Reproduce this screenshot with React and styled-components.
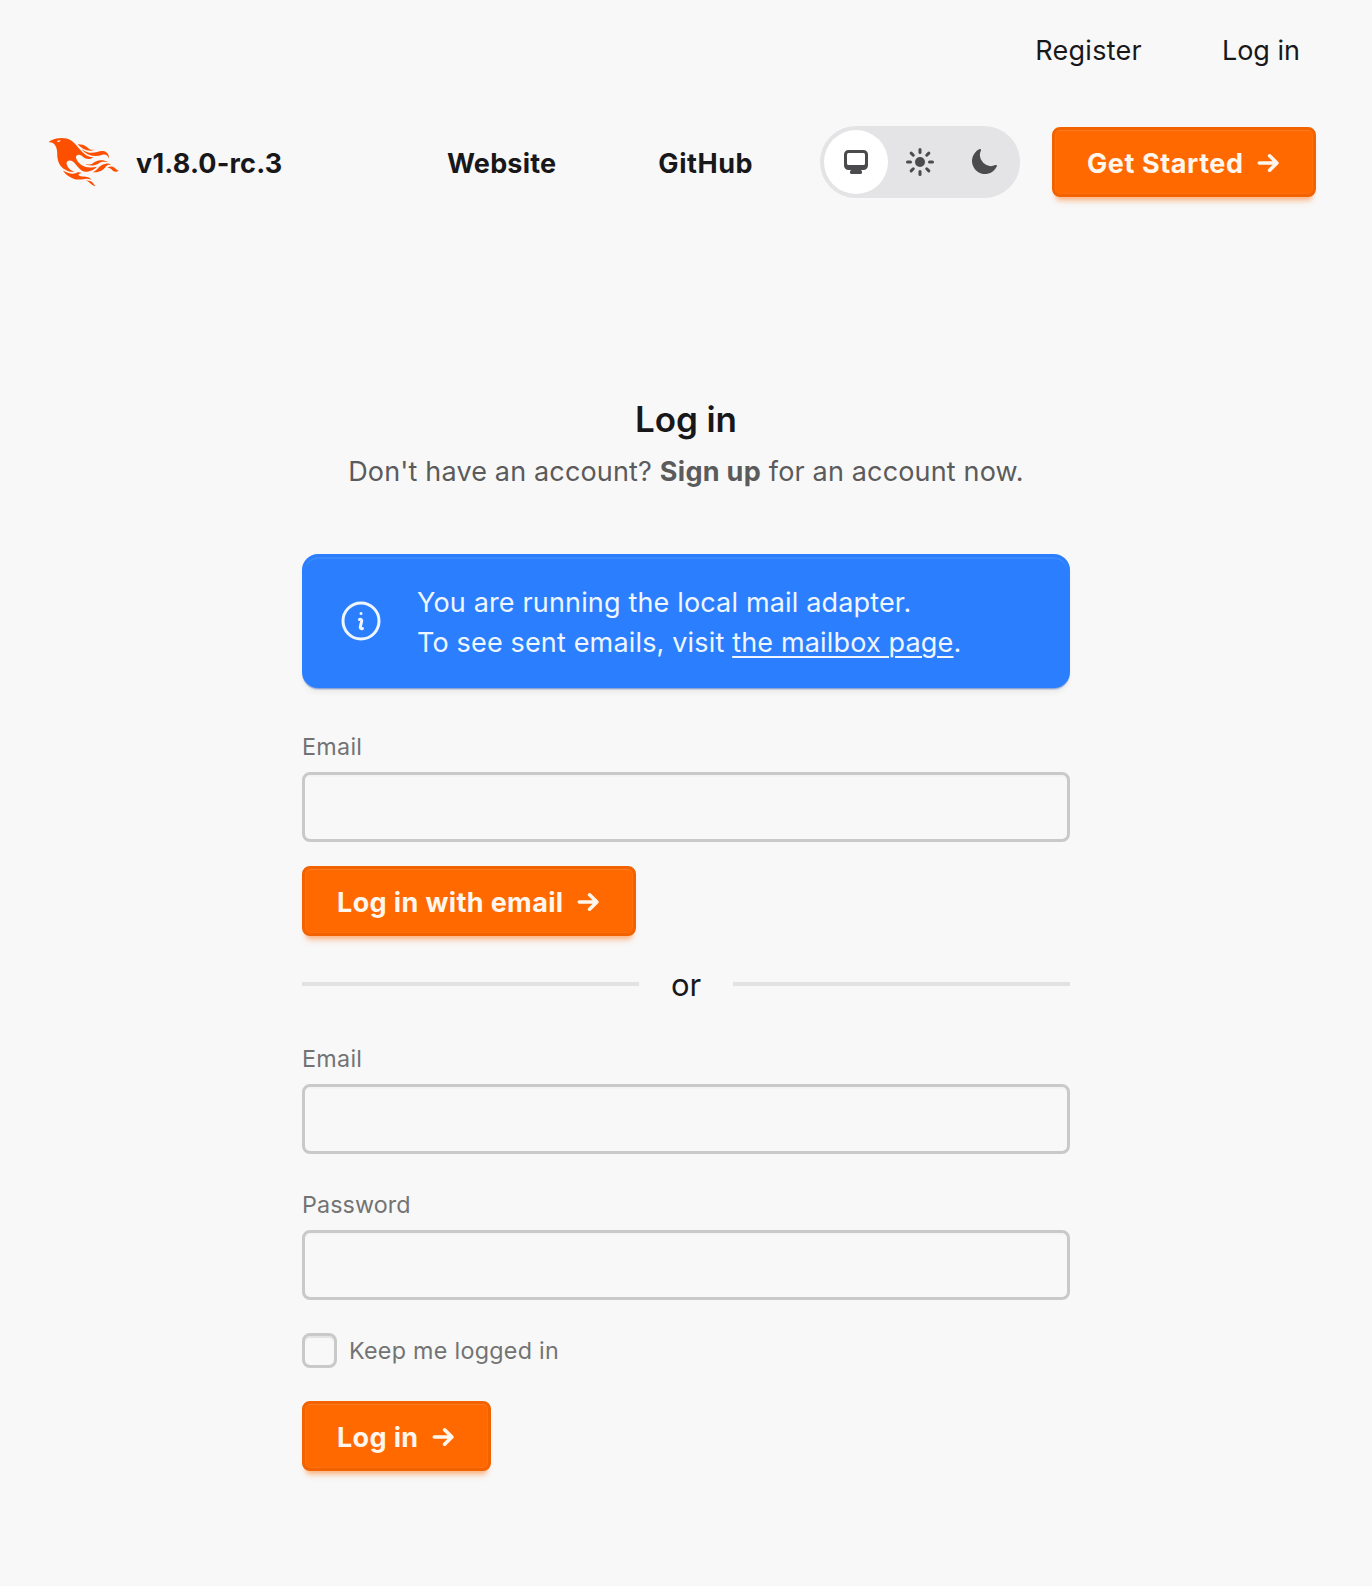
import React from "react";
import styled, { createGlobalStyle } from "styled-components";

const GlobalStyle = createGlobalStyle`
  *, *::before, *::after { box-sizing: border-box; }
  body {
    margin: 0;
    background: #f8f8f8;
    color: #18181b;
    font-family: Inter, "Liberation Sans", sans-serif;
    font-size: 27px;
    line-height: 40px;
    font-feature-settings: "calt" 0;
  }
`;

const Page = styled.div`
  min-height: 1586px;
  display: flex;
  flex-direction: column;
`;

const UserMenu = styled.nav`
  display: flex;
  justify-content: flex-end;
  gap: 80px;
  padding: 31px 72px 0 0;
  height: 94px;
`;

const MenuLink = styled.a`
  font-size: 27px;
  letter-spacing: ${(p) => p.$track || "0"};
  color: #18181b;
`;

const Header = styled.header`
  display: flex;
  align-items: center;
  height: 136px;
  padding: 0 56px 0 48px;
`;

const Brand = styled.a`
  display: flex;
  align-items: center;
  gap: 16px;
  width: 366px;
  font-weight: 650;
`;

const Logo = styled.svg`
  width: 72px;
  height: 48px;
  fill: #fd4f00;
`;

const Version = styled.span`
  padding-top: 3px;
  letter-spacing: ${(p) => p.$track || "0"};
`;

const NavLinks = styled.nav`
  display: flex;
  flex: 1;
  padding: 3px 0 0 33px;
  gap: 102px;
`;

const NavLink = styled.a`
  font-weight: 650;
  letter-spacing: ${(p) => p.$track || "0"};
`;

const ThemeToggle = styled.div`
  display: flex;
  border: 4px solid #e4e4e6;
  border-radius: 36px;
  background: #e4e4e6;
  margin-right: 32px;
`;

const ThemeOption = styled.button`
  display: flex;
  width: 64px;
  height: 64px;
  padding: 16px;
  border: 0;
  border-radius: 50%;
  color: #4b4b4d;
  background: ${(p) => (p.$active ? "#fff" : "transparent")};
`;

const ThemeIcon = styled.svg`
  width: 32px;
  height: 32px;
`;

const Button = styled.button`
  display: flex;
  align-items: center;
  gap: 13px;
  width: ${(p) => p.$width};
  height: 70px;
  padding: 3px 0 0 32px;
  border: 3px solid #f26200;
  border-radius: 8px;
  background: #ff6900;
  color: #fff7ed;
  font: 650 27px/40px Inter, "Liberation Sans", sans-serif;
  letter-spacing: ${(p) => p.$track || "0"};
  white-space: nowrap;
  box-shadow: inset 0 2px 0 -1px rgba(255, 255, 255, 0.08),
    inset 0 0 0 1px rgba(255, 255, 255, 0.05),
    0 6px 4px -4px rgba(255, 105, 0, 0.3),
    0 8px 6px -4px rgba(255, 105, 0, 0.3);
`;

const ArrowIcon = styled.svg`
  width: 22px;
  height: 20px;
  flex: none;
  margin-top: -2px;
`;

const Main = styled.main`
  display: flex;
  flex-direction: column;
  width: 768px;
  margin: 162px auto 0;
`;

const Title = styled.h1`
  margin: 0;
  height: 56px;
  text-align: center;
  font-size: 35px;
  font-weight: 600;
  line-height: 54px;
  letter-spacing: -0.1px;
`;

const Subtitle = styled.p`
  margin: 4px 0 62px;
  text-align: center;
  line-height: 40px;
  color: #5b5b5c;
  white-space: nowrap;
  letter-spacing: 0.16px;
`;

const Strong = styled.a`
  font-weight: 650;
  letter-spacing: 0.3px;
`;

const Alert = styled.div`
  display: flex;
  align-items: center;
  gap: 32px;
  height: 134px;
  padding: 24px 32px;
  border: 3px solid #2b7fff;
  border-radius: 16px;
  background: #2b7fff;
  color: #eff6ff;
  box-shadow: inset 0 2px 0 rgba(255, 255, 255, 0.08),
    0 2px 0 -1px rgba(35, 75, 170, 0.3),
    0 2px 0 rgba(43, 90, 200, 0.2),
    0 6px 6px -2px rgba(0, 0, 0, 0.07);
`;

const InfoIcon = styled.svg`
  width: 48px;
  height: 48px;
  flex: none;
`;

const AlertText = styled.div`
  padding-top: 3px;
`;

const AlertLine = styled.p`
  margin: 0;
  white-space: nowrap;
  font-weight: 430;
  letter-spacing: 0.16px;
`;

const MailLink = styled.a`
  text-decoration: underline;
  text-decoration-thickness: 2px;
  text-underline-offset: 4px;
`;

const Field = styled.label`
  display: flex;
  flex-direction: column;
  gap: 7px;
  margin-top: ${(p) => p.$top};
  color: #737374;
  font-size: 23.3px;
  line-height: 36px;
`;

const FieldName = styled.span`
  padding-top: 1px;
  letter-spacing: ${(p) => p.$track || "0.1px"};
`;

const Input = styled.input`
  width: 768px;
  height: 70px;
  padding: 0 24px;
  border: 3px solid #c9c9c9;
  border-radius: 8px;
  background: #f8f8f8;
  outline: 0;
  font: 27px Inter, sans-serif;
  box-shadow: inset 0 2px 0 rgba(0, 0, 0, 0.015);
`;

const Divider = styled.div`
  display: flex;
  align-items: center;
  gap: 32px;
  height: 48px;
  margin-top: 24px;
  font-size: 31px;
  line-height: 48px;

  &::before, &::after {
    content: "";
    flex: 1;
    height: 4px;
    background: #e2e2e2;
  }
`;

const DividerText = styled.span`
  width: 30px;
  display: flex;
  justify-content: center;
  padding-top: 2px;
`;

const CheckRow = styled.label`
  display: flex;
  align-items: center;
  gap: 12px;
  height: 36px;
  margin: 32px 0 33px;
  color: #737374;
  font-size: 23.3px;
`;

const Checkbox = styled.input`
  appearance: none;
  width: 35px;
  height: 35px;
  margin: 0;
  border: 3px solid #c9c9c9;
  border-radius: 8px;
  box-shadow: inset 0 2px 0 rgba(0, 0, 0, 0.08);
`;

const SubmitRow = styled.div`
  display: flex;
  margin-top: ${(p) => p.$top || "0"};
`;

const Arrow = () => (
  <ArrowIcon viewBox="0 0 22 20" fill="none" stroke="currentColor" strokeWidth="3.6" strokeLinecap="round" strokeLinejoin="round">
    <path d="M2.3 10H19.6M12.6 2.8L19.9 10L12.6 17.2" />
  </ArrowIcon>
);

const rays = [0, 45, 90, 135, 180, 225, 270, 315];

export default function App() {
  return (
    <Page>
      <GlobalStyle />
      <UserMenu>
        <MenuLink $track="0.25px">Register</MenuLink>
        <MenuLink>Log in</MenuLink>
      </UserMenu>
      <Header>
        <Brand>
          <Logo viewBox="0 0 71 48" aria-hidden="true">
            <path d="m26.371 33.477-.552-.1c-3.92-.729-6.397-3.1-7.57-6.829-.733-2.324.597-4.035 3.035-4.148 1.995-.092 3.362 1.055 4.57 2.39 1.557 1.72 2.984 3.558 4.514 5.305 2.202 2.515 4.797 4.134 8.347 3.634 3.183-.448 5.958-1.725 8.371-3.828.363-.316.761-.592 1.144-.886l-.241-.284c-2.027.63-4.093.841-6.205.735-3.195-.16-6.24-.828-8.964-2.582-2.486-1.601-4.319-3.746-5.19-6.611-.704-2.315.736-3.934 3.135-3.6.948.133 1.746.56 2.463 1.165.583.493 1.143 1.015 1.738 1.493 2.8 2.25 6.712 2.375 10.265-.068-5.842-.026-9.817-3.24-13.308-7.313-1.366-1.594-2.7-3.216-4.095-4.785-2.698-3.036-5.692-5.71-9.79-6.623C12.8-.623 7.745.14 2.893 2.361 1.926 2.804.997 3.319 0 4.149c.494 0 .763.006 1.032 0 2.446-.064 4.28 1.023 5.602 3.024.962 1.457 1.415 3.104 1.761 4.798.513 2.515.247 5.078.544 7.605.761 6.494 4.08 11.026 10.26 13.346 2.267.852 4.591 1.135 7.172.555ZM10.751 3.852c-.976.246-1.756-.148-2.56-.962 1.377-.343 2.592-.476 3.897-.528-.107.848-.607 1.306-1.336 1.49Zm32.002 37.924c-.085-.626-.62-.901-1.04-1.228-1.857-1.446-4.03-1.958-6.333-2-1.375-.026-2.735-.128-4.031-.61-.595-.22-1.26-.505-1.244-1.272.015-.78.693-1 1.31-1.184.505-.15 1.026-.247 1.6-.382-1.46-.936-2.886-1.065-4.787-.3-2.993 1.202-5.943 1.06-8.926-.017-1.684-.608-3.179-1.563-4.735-2.408l-.077.057c1.29 2.115 3.034 3.817 5.004 5.271 3.793 2.8 7.936 4.471 12.784 3.73A66.714 66.714 0 0 1 37 40.877c1.98-.16 3.866.398 5.753.899Zm-9.14-30.345c-.105-.076-.206-.266-.42-.069 1.745 2.36 3.985 4.098 6.683 5.193 4.354 1.767 8.773 2.07 13.293.51 3.51-1.21 6.033-.028 7.343 3.38.19-3.955-2.137-6.837-5.843-7.401-2.084-.318-4.01.373-5.962.94-5.434 1.575-10.485.798-15.094-2.553Zm27.085 15.425c.708.059 1.416.123 2.124.185-1.6-1.405-3.55-1.517-5.523-1.404-3.003.17-5.167 1.903-7.14 3.972-1.739 1.824-3.31 3.87-5.903 4.604.043.078.054.117.066.117.35.005.699.021 1.047.005 3.768-.17 7.317-.965 10.14-3.7.89-.86 1.685-1.817 2.544-2.71.716-.746 1.584-1.159 2.645-1.07Zm-8.753-4.67c-2.812.246-5.254 1.409-7.548 2.943-1.766 1.18-3.654 1.738-5.776 1.37-.374-.066-.75-.114-1.124-.17l-.013.156c.135.07.265.151.405.207.354.14.702.308 1.07.395 4.083.971 7.992.474 11.516-1.803 2.221-1.435 4.521-1.707 7.013-1.336.252.038.503.083.756.107.234.022.479.255.795.003-2.179-1.574-4.526-2.096-7.094-1.872Zm-10.049-9.544c1.475.051 2.943-.142 4.486-1.059-.452.04-.643.04-.827.076-2.126.424-4.033-.04-5.733-1.383-.623-.493-1.257-.974-1.889-1.457-2.503-1.914-5.374-2.555-8.514-2.5.05.154.054.26.108.315 3.417 3.455 7.371 5.836 12.369 6.008Zm24.727 17.731c-2.114-2.097-4.952-2.367-7.578-.537 1.738.078 3.043.632 4.101 1.728.374.388.763.768 1.182 1.106 1.6 1.29 4.311 1.352 5.896.155-1.861-.726-1.861-.726-3.601-2.452Zm-21.058 16.06c-1.858-3.46-4.981-4.24-8.59-4.008a9.667 9.667 0 0 1 2.977 1.39c.84.586 1.547 1.311 2.243 2.055 1.38 1.473 3.534 2.376 4.962 2.07-.656-.412-1.238-.848-1.592-1.507Z" />
          </Logo>
          <Version $track="0.2px">v1.8.0-rc.3</Version>
        </Brand>
        <NavLinks>
          <NavLink $track="0.2px">Website</NavLink>
          <NavLink $track="0.55px">GitHub</NavLink>
        </NavLinks>
        <ThemeToggle>
          <ThemeOption $active aria-label="System theme">
            <ThemeIcon viewBox="0 0 16 16" fill="currentColor">
              <path fillRule="evenodd" clipRule="evenodd" d="M2 4.25A2.25 2.25 0 0 1 4.25 2h7.5A2.25 2.25 0 0 1 14 4.25v5.5A2.25 2.25 0 0 1 11.75 12h-1.312c.1.128.21.248.328.36a.75.75 0 0 1 .234.545v.345a.75.75 0 0 1-.75.75h-4.5a.75.75 0 0 1-.75-.75v-.345a.75.75 0 0 1 .234-.545c.118-.111.228-.232.328-.36H4.25A2.25 2.25 0 0 1 2 9.75v-5.5Zm2.25-.75a.75.75 0 0 0-.75.75v4.5c0 .414.336.75.75.75h7.5a.75.75 0 0 0 .75-.75v-4.5a.75.75 0 0 0-.75-.75h-7.5Z" />
            </ThemeIcon>
          </ThemeOption>
          <ThemeOption aria-label="Light theme">
            <ThemeIcon viewBox="0 0 16 16" fill="currentColor">
              <circle cx="8" cy="8" r="2.5" />
              {rays.map((a) => (
                <path key={a} d="M8 1.75v1.5" stroke="currentColor" strokeWidth="1.5" strokeLinecap="round" transform={`rotate(${a} 8 8)`} />
              ))}
            </ThemeIcon>
          </ThemeOption>
          <ThemeOption aria-label="Dark theme">
            <ThemeIcon viewBox="0 0 16 16" fill="currentColor">
              <path d="M14.438 10.148c.19-.425-.321-.787-.748-.601A5.5 5.5 0 0 1 6.453 2.31c.186-.427-.176-.938-.6-.748a6.501 6.501 0 1 0 8.585 8.586Z" />
            </ThemeIcon>
          </ThemeOption>
        </ThemeToggle>
        <Button $width="264px" $track="0.58px">Get Started<Arrow /></Button>
      </Header>
      <Main>
        <Title>Log in</Title>
        <Subtitle>
          Don't have an account? <Strong>Sign up</Strong> for an account now.
        </Subtitle>
        <Alert>
          <InfoIcon viewBox="0 0 24 24" fill="none" stroke="currentColor" strokeWidth="1.5" strokeLinecap="round" strokeLinejoin="round">
            <path d="m11.25 11.25.041-.02a.75.75 0 0 1 1.063.852l-.708 2.836a.75.75 0 0 0 1.063.853l.041-.021M21 12a9 9 0 1 1-18 0 9 9 0 0 1 18 0Zm-9-3.75h.008v.008H12V8.25Z" />
          </InfoIcon>
          <AlertText>
            <AlertLine>You are running the local mail adapter.</AlertLine>
            <AlertLine>
              To see sent emails, visit <MailLink>the mailbox page</MailLink>.
            </AlertLine>
          </AlertText>
        </Alert>
        <Field $top="40px">
          <FieldName $track="0.3px">Email</FieldName>
          <Input type="email" />
        </Field>
        <SubmitRow $top="24px">
          <Button $width="334px" $track="0.37px">Log in with email<Arrow /></Button>
        </SubmitRow>
        <Divider><DividerText>or</DividerText></Divider>
        <Field $top="32px">
          <FieldName $track="0.3px">Email</FieldName>
          <Input type="email" />
        </Field>
        <Field $top="32px">
          <FieldName>Password</FieldName>
          <Input type="password" />
        </Field>
        <CheckRow>
          <Checkbox type="checkbox" />
          <FieldName $track="0.28px">Keep me logged in</FieldName>
        </CheckRow>
        <SubmitRow>
          <Button $width="189px" $track="0.35px">Log in<Arrow /></Button>
        </SubmitRow>
      </Main>
    </Page>
  );
}
